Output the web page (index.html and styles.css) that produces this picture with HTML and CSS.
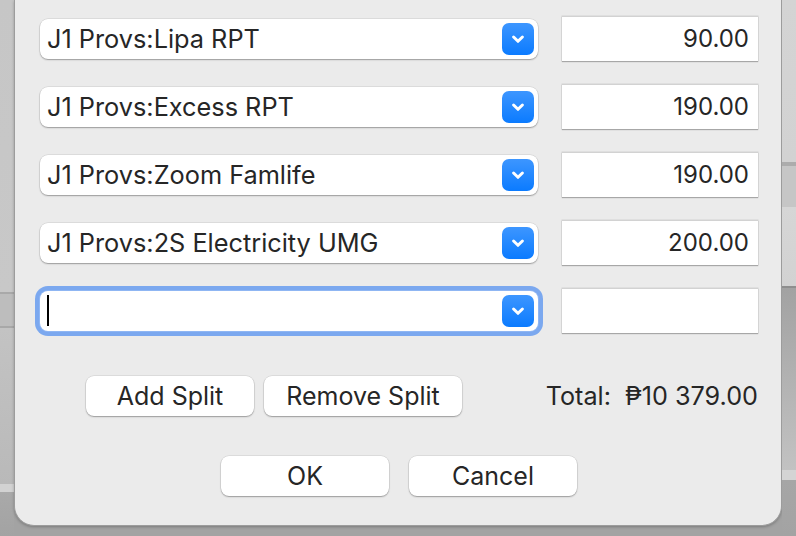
FILE: index.html
```html
<!DOCTYPE html>
<html>
<head>
<meta charset="utf-8">
<link rel="stylesheet" href="styles.css">
</head>
<body>
<div class="stage">
  <div class="strip strip-left"></div>
  <div class="center">
    <div class="dialog">
      <div class="rows">
        <div class="row">
          <div class="combo"><span class="combo-text">J1 Provs:Lipa RPT</span><span class="combo-btn"><svg viewBox="0 0 32 32" width="32" height="32"><path d="M11.6 14 L16 18.3 L20.4 14" fill="none" stroke="#fff" stroke-width="3" stroke-linecap="round" stroke-linejoin="round"/></svg></span></div>
          <div class="amount">90.00</div>
        </div>
        <div class="row">
          <div class="combo"><span class="combo-text">J1 Provs:Excess RPT</span><span class="combo-btn"><svg viewBox="0 0 32 32" width="32" height="32"><path d="M11.6 14 L16 18.3 L20.4 14" fill="none" stroke="#fff" stroke-width="3" stroke-linecap="round" stroke-linejoin="round"/></svg></span></div>
          <div class="amount">190.00</div>
        </div>
        <div class="row">
          <div class="combo"><span class="combo-text">J1 Provs:Zoom Famlife</span><span class="combo-btn"><svg viewBox="0 0 32 32" width="32" height="32"><path d="M11.6 14 L16 18.3 L20.4 14" fill="none" stroke="#fff" stroke-width="3" stroke-linecap="round" stroke-linejoin="round"/></svg></span></div>
          <div class="amount">190.00</div>
        </div>
        <div class="row">
          <div class="combo"><span class="combo-text">J1 Provs:2S Electricity UMG</span><span class="combo-btn"><svg viewBox="0 0 32 32" width="32" height="32"><path d="M11.6 14 L16 18.3 L20.4 14" fill="none" stroke="#fff" stroke-width="3" stroke-linecap="round" stroke-linejoin="round"/></svg></span></div>
          <div class="amount">200.00</div>
        </div>
        <div class="row">
          <div class="combo combo-focus"><span class="combo-text"><span class="caret"></span></span><span class="combo-btn"><svg viewBox="0 0 32 32" width="32" height="32"><path d="M11.6 14 L16 18.3 L20.4 14" fill="none" stroke="#fff" stroke-width="3" stroke-linecap="round" stroke-linejoin="round"/></svg></span></div>
          <div class="amount"></div>
        </div>
      </div>
      <div class="split-bar">
        <div class="split-buttons">
          <button class="btn btn-add">Add Split</button>
          <button class="btn btn-remove">Remove Split</button>
        </div>
        <div class="total">Total:&nbsp; ₱10 379.00</div>
      </div>
      <div class="actions">
        <button class="btn btn-action">OK</button>
        <button class="btn btn-action">Cancel</button>
      </div>
    </div>
    <div class="under"></div>
  </div>
  <div class="strip strip-right"></div>
</div>
</body>
</html>
```

FILE: styles.css
```css
html, body {
  margin: 0;
  padding: 0;
}
body {
  width: 796px;
  height: 536px;
  overflow: hidden;
  background: #a3a3a3;
  font-family: "Inter", "Liberation Sans", "DejaVu Sans", sans-serif;
  color: #262626;
}
.stage {
  display: flex;
  width: 796px;
  height: 536px;
}
.strip {
  width: 14px;
  flex: none;
  height: 536px;
}
.strip-left {
  background: linear-gradient(to bottom,
    #c6c6c6 0, #c8c8c8 292px,
    #a9a9a9 292px, #a9a9a9 294px,
    #bdbdbd 294px, #bdbdbd 326px,
    #a8a8a8 326px, #a8a8a8 328px,
    #c3c3c3 328px, #b9b9b9 484px,
    #d2d2d2 484px, #d2d2d2 492px,
    #a9a9a9 492px, #a3a3a3 536px);
}
.strip-right {
  background: linear-gradient(to bottom,
    #d4d4d4 0, #d2d2d2 162px,
    #acacac 162px, #acacac 166px,
    #c6c6c6 166px, #c6c6c6 207px,
    #d6d6d6 207px, #d2d2d2 286px,
    #8e8e8e 286px, #8e8e8e 288px,
    #a2a2a2 288px, #c2c2c2 470px,
    #d4d4d4 470px, #d4d4d4 480px,
    #a6a6a6 480px, #a3a3a3 536px);
}
.center {
  width: 768px;
  flex: none;
  display: flex;
  flex-direction: column;
}
.dialog {
  height: 526px;
  box-sizing: border-box;
  background: #ebebeb;
  border: 1px solid #9c9c9c;
  border-top: none;
  border-radius: 0 0 20px 20px;
  box-shadow: 0 1px 3px rgba(0,0,0,0.25);
  padding: 16px 23px 0 25px;
  display: flex;
  flex-direction: column;
}
.under {
  flex: 1;
}
.rows {
  display: flex;
  flex-direction: column;
  gap: 23px;
}
.row {
  height: 45px;
  display: flex;
  align-items: center;
  justify-content: space-between;
}
.combo {
  width: 498px;
  height: 40px;
  box-sizing: border-box;
  background: #fff;
  border-radius: 8px;
  box-shadow: 0 0 0 0.5px rgba(0,0,0,0.12), 0 1px 1.5px rgba(0,0,0,0.3);
  display: flex;
  align-items: center;
  justify-content: space-between;
  padding: 0 4px 0 7px;
}
.combo-focus {
  box-shadow: 0 0 0 1px #8fb6f3, 0 0 0 5px #7ba8ef;
}
.combo-text {
  font-size: 25.3px;
  white-space: nowrap;
  display: flex;
  align-items: center;
}
.caret {
  display: block;
  width: 2px;
  height: 31px;
  background: #000;
  margin-left: 0;
}
.combo-btn {
  width: 32px;
  height: 32px;
  border-radius: 7px;
  background: linear-gradient(to bottom, #3d96ff, #0b7bff);
  display: flex;
  align-items: center;
  justify-content: center;
}
.combo-btn svg {
  display: block;
}
.amount {
  width: 196px;
  height: 45px;
  box-sizing: border-box;
  background: #fff;
  border-top: 1px solid #d2d2d2;
  box-shadow: 0 0 0 0.5px rgba(0,0,0,0.1), 0 1px 1px rgba(0,0,0,0.25);
  font-size: 24px;
  text-align: right;
  padding: 0 9px;
  line-height: 43px;
}
.split-bar {
  margin-top: 43px;
  display: flex;
  align-items: center;
  justify-content: space-between;
  height: 40px;
}
.split-buttons {
  display: flex;
  gap: 10px;
  margin-left: 46px;
}
.btn {
  height: 40px;
  box-sizing: border-box;
  background: #fff;
  border: none;
  border-radius: 8px;
  box-shadow: 0 0 0 0.5px rgba(0,0,0,0.12), 0 1px 1.5px rgba(0,0,0,0.3);
  font-family: "Inter", "Liberation Sans", sans-serif;
  font-size: 25px;
  color: #262626;
  padding: 0;
}
.btn-add {
  width: 168px;
}
.btn-remove {
  width: 198px;
}
.total {
  font-size: 25.2px;
  white-space: pre;
}
.actions {
  margin-top: 40px;
  display: flex;
  justify-content: center;
  gap: 20px;
}
.btn-action {
  width: 168px;
}
```
